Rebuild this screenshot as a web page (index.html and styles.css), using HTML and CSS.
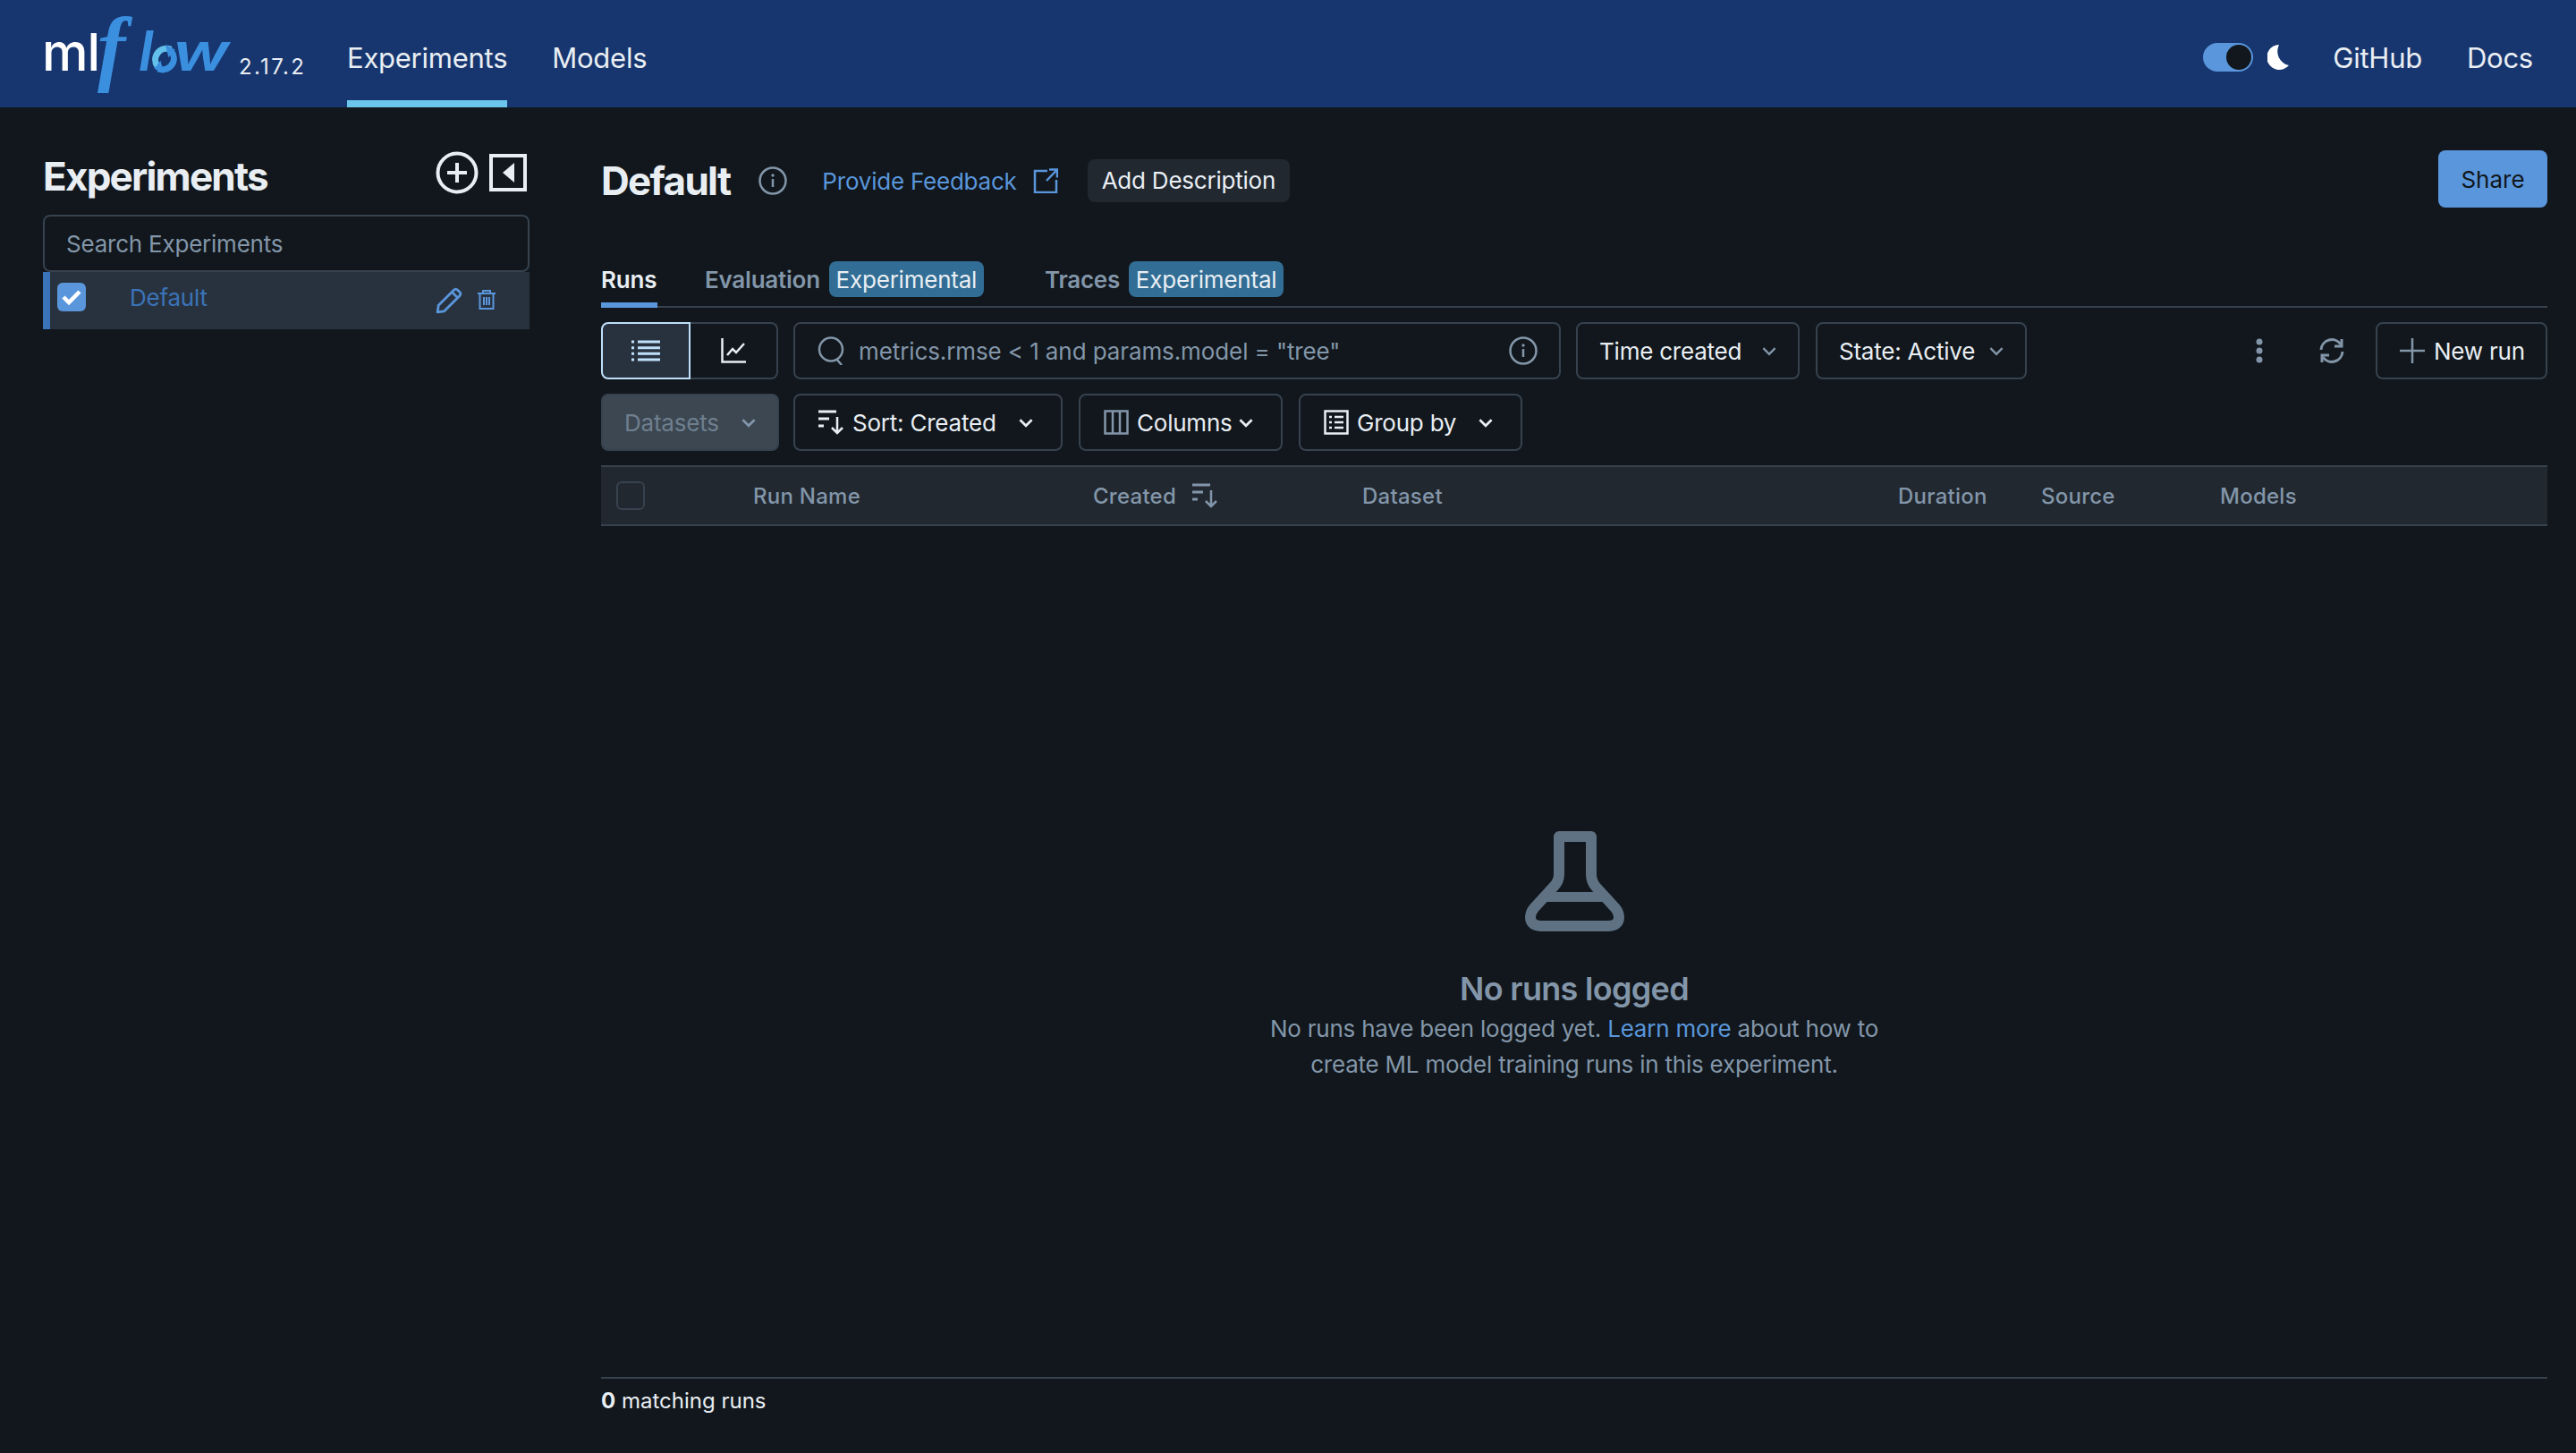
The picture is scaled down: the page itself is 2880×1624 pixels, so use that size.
FILE: index.html
```html
<!DOCTYPE html>
<html lang="en">
<head>
<meta charset="utf-8">
<title>MLflow</title>
<link rel="stylesheet" href="styles.css">
</head>
<body>
<header class="topbar">
  <div class="logo">
    <span class="logo-ml">ml</span><span class="logo-f">f</span><span class="logo-l">l</span>
    <svg class="logo-o" viewBox="0 0 36 36"><path d="M9 27A14 14 0 0 1 26 6" fill="none" stroke="#63c0ea" stroke-width="8"/><path d="M27 9A14 14 0 0 1 10 30" fill="none" stroke="#3b8fdf" stroke-width="8"/><path d="M19 0l12 6-8 10zM17 36L5 30l8-10z" fill="#3b8fdf"/></svg>
    <span class="logo-w">w</span>
    <span class="version">2.17.2</span>
  </div>
  <nav class="nav">
    <a class="nav-item nav-active">Experiments</a>
    <a class="nav-item">Models</a>
  </nav>
  <div class="top-right">
    <span class="switch"><span class="knob"></span></span>
    <svg class="moon" viewBox="0 0 24 28"><path d="M13 0A14 14 0 1 0 24 23A16 16 0 0 1 13 0Z" fill="#fff"/></svg>
    <a class="top-link top-github">GitHub</a>
    <a class="top-link">Docs</a>
  </div>
</header>

<div class="app">
  <aside class="sidebar">
    <div class="side-head">
      <h2 class="side-title">Experiments</h2>
      <svg class="ic-add" viewBox="0 0 48 48"><circle cx="24" cy="24" r="21.500" fill="none" stroke="#e9eef3" stroke-width="4"/><path d="M24 13v22M13 24h22" stroke="#e9eef3" stroke-width="4" fill="none"/></svg>
      <svg class="ic-collapse" viewBox="0 0 42 42"><rect x="2" y="2" width="38" height="38" fill="none" stroke="#e9eef3" stroke-width="4"/><path d="M28 10v22L15 21z" fill="#e9eef3"/></svg>
    </div>
    <div class="side-search">Search Experiments</div>
    <div class="side-row">
      <span class="check"><svg viewBox="0 0 32 32"><path d="M7 16l6 6 12-12" fill="none" stroke="#fff" stroke-width="4.500"/></svg></span>
      <span class="side-name">Default</span>
      <svg class="ic-pencil" viewBox="0 0 28 28"><path d="M2 26l1-7L19 3q2-2 4 0l2 2q2 2 0 4L9 25zM17 5l6 6" fill="none" stroke="#5a96db" stroke-width="2.600" stroke-linejoin="round"/></svg>
      <svg class="ic-trash" viewBox="0 0 22 24"><path d="M1 5h20M7 5V2h8v3M3.500 5v17h15V5M8 9v9M11 9v9M14 9v9" fill="none" stroke="#5a96db" stroke-width="2"/></svg>
    </div>
  </aside>

  <main class="main">
    <div class="title-row">
      <h1 class="page-title">Default</h1>
      <svg class="ic-info" viewBox="0 0 32 32"><circle cx="16" cy="16" r="14.500" fill="none" stroke="#8396a9" stroke-width="2.500"/><path d="M16 14v9" stroke="#8396a9" stroke-width="2.500"/><circle cx="16" cy="10" r="1.700" fill="#8396a9"/></svg>
      <a class="feedback">Provide Feedback</a>
      <svg class="ic-ext" viewBox="0 0 28 28"><path d="M16 3H2v24h24V13M15 14L26.500 2M18 1.500h9v9" fill="none" stroke="#5a96db" stroke-width="2.500"/></svg>
      <span class="add-desc">Add Description</span>
      <button class="share">Share</button>
    </div>

    <div class="tabs">
      <span class="tab tab-active">Runs</span>
      <span class="tab tab-eval">Evaluation<span class="tag">Experimental</span></span>
      <span class="tab tab-traces">Traces<span class="tag">Experimental</span></span>
    </div>

    <div class="toolbar">
      <div class="seg">
        <span class="seg-a"><svg class="ic-list" viewBox="0 0 32 24"><path d="M7 2h25M7 8.700h25M7 15.300h25M7 22h25" stroke="#bfe0fa" stroke-width="3"/><path d="M0 2h3M0 8.700h3M0 15.300h3M0 22h3" stroke="#bfe0fa" stroke-width="3"/></svg></span>
        <span class="seg-b"><svg class="ic-chart" viewBox="0 0 28 28"><path d="M1.500 0v26.500H28" fill="none" stroke="#e9eef3" stroke-width="2.500"/><path d="M7 19l6-7 4 4 9-10" fill="none" stroke="#e9eef3" stroke-width="2.500"/></svg></span>
      </div>
      <div class="search">
        <svg class="ic-search" viewBox="0 0 30 32"><circle cx="15" cy="14.500" r="13" fill="none" stroke="#8396a9" stroke-width="2.500"/><path d="M21 25l6 7" stroke="#8396a9" stroke-width="2.500"/></svg>
        <span class="search-text">metrics.rmse &lt; 1 and params.model = "tree"</span>
        <svg class="ic-info" viewBox="0 0 32 32"><circle cx="16" cy="16" r="14.500" fill="none" stroke="#8396a9" stroke-width="2.500"/><path d="M16 14v9" stroke="#8396a9" stroke-width="2.500"/><circle cx="16" cy="10" r="1.700" fill="#8396a9"/></svg>
      </div>
      <button class="btn btn-time">Time created<svg class="chev chev-dim" viewBox="0 0 16 10"><path d="M2 2l6 6 6-6" fill="none" stroke="#8396a9" stroke-width="2.200"/></svg></button>
      <button class="btn btn-state">State: Active<svg class="chev chev-dim" viewBox="0 0 16 10"><path d="M2 2l6 6 6-6" fill="none" stroke="#8396a9" stroke-width="2.200"/></svg></button>
      <span class="spacer"></span>
      <svg class="ic-kebab" viewBox="0 0 8 28"><circle cx="4" cy="4" r="3.500" fill="#8396a9"/><circle cx="4" cy="14" r="3.500" fill="#8396a9"/><circle cx="4" cy="24" r="3.500" fill="#8396a9"/></svg>
      <svg class="ic-refresh" viewBox="0 0 30 30"><path d="M3 14A12 12 0 0 1 25 8M27 16A12 12 0 0 1 5 22" fill="none" stroke="#8396a9" stroke-width="3"/><path d="M26 2v8h-8M4 28v-8h8" fill="none" stroke="#8396a9" stroke-width="3"/></svg>
      <button class="btn btn-new"><svg class="ic-plus" viewBox="0 0 28 28"><path d="M14 0v28M0 14h28" stroke="#8396a9" stroke-width="2.500"/></svg>New run</button>
    </div>

    <div class="toolbar toolbar-2">
      <button class="btn btn-datasets">Datasets<svg class="chev" viewBox="0 0 16 10"><path d="M2 2l6 6 6-6" fill="none" stroke="#8396a9" stroke-width="2.400"/></svg></button>
      <button class="btn btn-sort"><svg class="ic-sort" viewBox="0 0 30 28"><path d="M0 2h20M0 10h12M0 18h6" stroke="#e9eef3" stroke-width="3"/><path d="M21 8v18M15 20l6 6 6-6" fill="none" stroke="#e9eef3" stroke-width="2.500"/></svg>Sort: Created<svg class="chev chev-sort" viewBox="0 0 16 10"><path d="M2 2l6 6 6-6" fill="none" stroke="#e9eef3" stroke-width="2.400"/></svg></button>
      <button class="btn btn-cols"><svg class="ic-cols" viewBox="0 0 28 28"><path d="M1.500 1.500h25v25h-25zM10 1.500v25M18 1.500v25" fill="none" stroke="#8396a9" stroke-width="2.500"/></svg>Columns<svg class="chev chev-cols" viewBox="0 0 16 10"><path d="M2 2l6 6 6-6" fill="none" stroke="#e9eef3" stroke-width="2.400"/></svg></button>
      <button class="btn btn-group"><svg class="ic-cols" viewBox="0 0 28 28"><path d="M1.500 1.500h25v25h-25z" fill="none" stroke="#e9eef3" stroke-width="2.500"/><path d="M6 8h3M12 8h10M6 14h3M12 14h10M6 20h3M12 20h10" stroke="#e9eef3" stroke-width="2.500"/></svg>Group by<svg class="chev chev-group" viewBox="0 0 16 10"><path d="M2 2l6 6 6-6" fill="none" stroke="#e9eef3" stroke-width="2.400"/></svg></button>
    </div>

    <div class="table-head">
      <span class="th-check"></span>
      <span class="th th-name">Run Name</span>
      <span class="th th-created">Created<svg class="ic-sort2" viewBox="0 0 30 28"><path d="M0 2h20M0 10h12M0 18h6" stroke="#8396a9" stroke-width="3"/><path d="M21 8v18M15 20l6 6 6-6" fill="none" stroke="#8396a9" stroke-width="2.500"/></svg></span>
      <span class="th th-dataset">Dataset</span>
      <span class="th th-duration">Duration</span>
      <span class="th th-source">Source</span>
      <span class="th">Models</span>
    </div>

    <section class="empty">
      <svg class="flask" viewBox="0 0 111 112"><path d="M38 6H74V48Q74 56 79 62L101 86Q105 91 105 96Q105 106 92 106H19Q6 106 6 96Q6 91 10 86L32 62Q38 56 38 48Z" fill="none" stroke="#5f7284" stroke-width="12" stroke-linejoin="round"/><path d="M24 73.500H87" stroke="#5f7284" stroke-width="11"/></svg>
      <h3 class="empty-title">No runs logged</h3>
      <p class="empty-text">No runs have been logged yet. <a class="learn">Learn more</a> about how to<br>create ML model training runs in this experiment.</p>
    </section>

    <footer class="footer"><b>0</b> matching runs</footer>
  </main>
</div>
</body>
</html>
```

FILE: styles.css
```css
* { box-sizing: border-box; }
html, body { margin: 0; height: 100%; }
body {
  background: #11171c;
  color: #e9eef3;
  font-family: Inter, "Liberation Sans", sans-serif;
  font-size: 26px;
  letter-spacing: -.22px;
  height: 1624px;
  overflow: hidden;
  display: flex;
  flex-direction: column;
}
svg { display: block; flex: none; }

/* top bar */
.topbar {
  height: 120px;
  background: #17366f;
  display: flex;
  align-items: stretch;
  padding-left: 47px;
  flex: none;
}
.logo { display: flex; width: 341px; height: 120px; }
.logo-ml { font-size: 58px; font-weight: 500; color: #fff; line-height: 120px; height: 120px; margin-top: -2px; letter-spacing: -1px; width: 62px; }
.logo-f { font-family: "Liberation Serif", serif; font-style: italic; font-weight: 700; font-size: 94px; color: #3b8fdf; line-height: 120px; width: 46px; margin-top: -8px; }
.logo-l { font-style: italic; font-size: 62px; font-weight: 600; color: #3b8fdf; line-height: 120px; margin-top: -3px; width: 13px; }
.logo-o { width: 32px; height: 32px; margin-top: 50px; }
.logo-w { font-style: italic; font-size: 58px; font-weight: 600; color: #3b8fdf; line-height: 120px; margin-top: -2px; transform: scaleX(1.3); transform-origin: 0 50%; width: 62px; margin-left: -7px; letter-spacing: 0; }
.version { font-size: 24px; line-height: 120px; color: #e9eef3; letter-spacing: 2.300px; margin-top: 15px; margin-left: 12px; }

.nav { display: flex; gap: 50px; }
.nav-item { font-size: 31px; letter-spacing: -.25px; color: #e9eef3; line-height: 130px; height: 120px; }
.nav-active { border-bottom: 8px solid #6cc5ea; }

.top-right { margin-left: auto; display: flex; align-items: center; padding: 8px 48px 0 0; }
.switch { width: 56px; height: 32px; border-radius: 16px; background: #5a96db; display: flex; align-items: center; justify-content: flex-end; padding-right: 2px; }
.knob { width: 28px; height: 28px; border-radius: 50%; background: #11171c; }
.moon { width: 24px; height: 28px; margin-left: 16px; margin-right: 49px; }
.top-link { font-size: 31px; letter-spacing: -.25px; color: #e9eef3; }
.top-github { margin-right: 50px; }

/* app layout */
.app { flex: 1; display: flex; min-height: 0; }
.sidebar { width: 672px; padding: 48px 80px 0 48px; flex: none; }
.side-head { display: flex; align-items: flex-start; height: 72px; }
.side-title { font-size: 44px; font-weight: 700; margin: 0 auto 0 0; line-height: 58px; letter-spacing: -1.800px; }
.ic-add { width: 48px; height: 48px; margin-top: 1px; }
.ic-collapse { width: 42px; height: 42px; margin: 4px 3px 0 12px; }
.side-search { height: 64px; border: 2px solid #37424f; border-radius: 8px; padding-left: 24px; color: #8396a9; line-height: 62px; }
.side-row { height: 64px; background: #28323f; border-left: 8px solid #3b73b8; display: flex; align-items: center; padding-left: 8px; }
.check { width: 32px; height: 32px; border-radius: 6px; background: #5a96db; display: block; margin-top: -8px; }
.side-name { color: #3b73b8; margin-left: 49px; margin-top: -8px; width: 342px; }
.ic-pencil { width: 30px; height: 30px; margin-top: -1px; }
.ic-trash { width: 22px; height: 24px; margin-left: 16px; margin-top: -3px; }

.main { flex: 1; min-width: 0; padding-right: 32px; display: flex; flex-direction: column; }
.title-row { display: flex; align-items: center; margin-top: 48px; height: 64px; padding-top: 4px; }
.page-title { font-size: 44px; font-weight: 700; margin: 0; letter-spacing: -1.700px; }
.ic-info { width: 32px; height: 32px; }
.title-row .ic-info { margin-left: 32px; }
.feedback { color: #5a96db; margin-left: 39px; }
.ic-ext { width: 28px; height: 28px; margin-left: 18px; }
.add-desc { margin-left: 33px; height: 48px; background: #212830; border-radius: 8px; padding: 0 16px; line-height: 48px; }
.share { margin-left: auto; margin-top: -4px; align-self: flex-start; width: 122px; height: 64px; border: 0; border-radius: 8px; background: #5a96db; color: #11171c; font: 26px Inter, sans-serif; padding: 0; }

.tabs { display: flex; height: 112px; padding-top: 60px; border-bottom: 2px solid #37424f; font-weight: 600; color: #8396a9; }
.tab { display: flex; align-items: flex-start; height: 50px; line-height: 42px; }
.tab-active { color: #e9eef3; border-bottom: 6px solid #5a96db; width: 63px; height: 52px; }
.tab-eval { margin-left: 53px; }
.tab-traces { margin-left: 68px; }
.tag { margin-left: 10px; height: 40px; width: 173px; border-radius: 8px; background: #316d94; color: #e9eef3; font-weight: 400; text-align: center; }

.toolbar { display: flex; height: 64px; margin-top: 16px; align-items: center; }
.seg { display: flex; height: 64px; width: 198px; }
.seg-a { width: 100px; background: #28323f; border: 2px solid #bfe0fa; border-radius: 8px 0 0 8px; display: flex; align-items: center; justify-content: center; }
.seg-b { width: 98px; border: 2px solid #37424f; border-left: 0; border-radius: 0 8px 8px 0; display: flex; align-items: center; justify-content: center; }
.ic-list { width: 32px; height: 24px; }
.ic-chart { width: 28px; height: 28px; }
.search { width: 858px; height: 64px; margin-left: 17px; border: 2px solid #37424f; border-radius: 8px; display: flex; align-items: center; padding: 0 24px 0 25px; color: #8396a9; }
.ic-search { width: 30px; height: 32px; }
.search-text { margin-left: 16px; margin-right: auto; letter-spacing: -.1px; }
.btn { height: 64px; border: 2px solid #37424f; border-radius: 8px; background: transparent; color: #e9eef3; font: 26px Inter, sans-serif; letter-spacing: -.22px; display: flex; align-items: center; padding: 0 0 0 24px; margin: 0; }
.chev { width: 18px; height: 11px; }
.chev-dim { margin-left: auto; margin-right: 23px; }
.btn-time { width: 250px; margin-left: 17px; }
.btn-state { width: 236px; margin-left: 18px; }
.spacer { flex: 1; }
.ic-kebab { width: 8px; height: 28px; margin-right: 62px; }
.ic-refresh { width: 30px; height: 30px; margin-right: 34px; }
.btn-new { width: 192px; padding-left: 25px; }
.ic-plus { width: 28px; height: 28px; margin-right: 10px; }

.toolbar-2 { margin-top: 16px; }
.btn-datasets { width: 199px; background: #3c4752; color: #6f7f8f; }
.btn-datasets .chev { margin-left: 24px; }
.btn-sort { width: 301px; margin-left: 16px; padding-left: 26px; }
.ic-sort { width: 30px; height: 28px; margin-right: 8px; }
.chev-sort { margin-left: 24px; }
.btn-cols { width: 228px; margin-left: 18px; padding-left: 26px; }
.ic-cols { width: 28px; height: 28px; margin-right: 9px; }
.chev-cols { margin-left: 6px; }
.btn-group { width: 250px; margin-left: 18px; padding-left: 26px; }
.chev-group { margin-left: 24px; }

.table-head { height: 68px; margin-top: 16px; background: #212830; border-top: 2px solid #37424f; border-bottom: 2px solid #37424f; display: flex; align-items: center; color: #8396a9; font-size: 24px; font-weight: 500; letter-spacing: .25px; padding-left: 17px; }
.th-check { width: 32px; height: 32px; border: 2px solid #37424f; border-radius: 6px; margin-right: 121px; }
.th { white-space: nowrap; }
.th-name { width: 380px; }
.th-created { width: 301px; display: flex; align-items: center; }
.ic-sort2 { width: 30px; height: 28px; margin-left: 18px; }
.th-dataset { width: 599px; }
.th-duration { width: 160px; }
.th-source { width: 200px; }

.empty { flex: 1; display: flex; flex-direction: column; align-items: center; padding-top: 341px; }
.flask { width: 111px; height: 112px; }
.empty-title { font-size: 36px; font-weight: 600; letter-spacing: -.7px; color: #8396a9; margin: 40px 0 0; line-height: 48px; }
.empty-text { margin: 1px 0 0; color: #8396a9; line-height: 40px; text-align: center; }
.learn { color: #5a96db; }

.footer { height: 85px; border-top: 2px solid #37424f; line-height: 50px; flex: none; font-size: 24px; letter-spacing: 0; color: #e9eef3; }
```
